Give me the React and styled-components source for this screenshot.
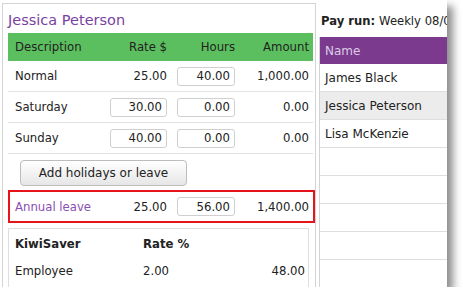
import React from 'react'
import styled, { createGlobalStyle } from 'styled-components'

const GlobalStyle = createGlobalStyle`
  body {
    margin: 0;
    background: #fff;
    font-family: "DejaVu Sans", Verdana, sans-serif;
    color: #222;
  }
`;

const Window = styled.div`
  width: 447px;
  height: 287px;
  display: flex;
  align-items: flex-start;
  overflow: hidden;
  background: #fff;
  box-shadow: 6px 6px 8px rgba(0, 0, 0, 0.45);
`;

const LeftPanel = styled.div`
  margin: 3px 0 0 2px;
  width: 314px;
  height: 290px;
  flex-shrink: 0;
  box-sizing: border-box;
  border: 1px solid #d4d4d4;
  border-bottom: none;
  padding: 0 2px 0 5px;
`;

const Title = styled.div`
  font-size: 14.5px;
  line-height: 17px;
  padding: 8px 0 4px;
  color: #7b3f9f;
`;

const Row = styled.div`
  display: grid;
  grid-template-columns: 100px 63px 68px 74px;
  align-items: center;
  height: ${p => p.$h || 30}px;
  font-size: 11.7px;
  background: ${p => p.$head ? '#5cbf5f' : 'transparent'};
  border-bottom: ${p => p.$head ? 'none' : '1px solid #e2e2e2'};
`;

const Cell = styled.div`
  padding: 0 4px;
  text-align: ${p => p.$left ? 'left' : 'right'};
  padding-left: ${p => p.$left ? '7px' : '4px'};
  display: flex;
  justify-content: ${p => p.$left ? 'flex-start' : 'flex-end'};
  white-space: nowrap;
`;

const Field = styled.input`
  width: ${p => p.$w || 58}px;
  height: 19px;
  box-sizing: border-box;
  border: 1px solid #cfcfcf;
  border-radius: 3px;
  text-align: right;
  padding: 0 4px;
  font: 11.7px "DejaVu Sans", Verdana, sans-serif;
  color: #222;
`;

const ButtonRow = styled.div`
  padding: 6px 0 4px 12px;
`;

const Button = styled.button`
  height: 26px;
  width: 167px;
  border: 1px solid #bdbdbd;
  border-radius: 4px;
  background: linear-gradient(#ffffff, #e6e6e6);
  font: 12px "DejaVu Sans", Verdana, sans-serif;
  color: #222;
  padding: 0;
`;

const Highlight = styled.div`
  width: 307px;
  box-sizing: border-box;
  border: 2px solid #e8141b;
`;

const LeaveRow = styled(Row)`
  grid-template-columns: 98px 63px 68px 74px;
  height: 29px;
  border-bottom: none;
  color: #222;
`;

const LeaveName = styled(Cell)`
  padding-left: 5px;
  color: #8a4fb4;
`;

const SaverBox = styled.div`
  margin-top: 5px;
  width: 301px;
  height: 70px;
  box-sizing: border-box;
  border: 1px solid #dedede;
  border-bottom: none;
`;

const SaverRow = styled.div`
  display: grid;
  grid-template-columns: 128px 1fr auto;
  align-items: center;
  height: ${p => p.$h}px;
  padding: 0 3px 0 6px;
  font-size: 11.7px;
  font-weight: ${p => p.$bold ? 'bold' : 'normal'};
`;

const RightPanel = styled.div`
  margin: 4px 0 0 3px;
  flex: 1;
  min-width: 0;
`;

const PayRun = styled.div`
  height: 33px;
  display: flex;
  align-items: center;
  padding: 0 0 0 2px;
  font-size: 11.6px;
  white-space: nowrap;
  overflow: hidden;
  b { margin-right: 4px; }
`;

const List = styled.div`
  border-left: 1px solid #d4d4d4;
`;

const ListHead = styled.div`
  height: 27px;
  display: flex;
  align-items: center;
  padding-left: 5px;
  background: #7b3a8d;
  color: #dccbe6;
  font-size: 12px;
`;

const ListRow = styled.div`
  height: 27px;
  display: flex;
  align-items: center;
  padding-left: 5px;
  font-size: 12px;
  border-bottom: 1px solid #dedede;
  background: ${p => p.$active ? '#ececec' : '#fff'};
  white-space: nowrap;
`;

const lines = [
  { name: 'Normal', rate: '25.00', hours: '40.00', amount: '1,000.00' },
  { name: 'Saturday', rate: '30.00', hours: '0.00', amount: '0.00', edit: true },
  { name: 'Sunday', rate: '40.00', hours: '0.00', amount: '0.00', edit: true },
];

const employees = ['James Black', 'Jessica Peterson', 'Lisa McKenzie', '', '', '', '', ''];

export default function App() {
  return (
    <>
      <GlobalStyle />
      <Window>
        <LeftPanel>
          <Title>Jessica Peterson</Title>
          <Row $head $h={28}>
            <Cell $left>Description</Cell>
            <Cell>Rate $</Cell>
            <Cell>Hours</Cell>
            <Cell>Amount</Cell>
          </Row>
          {lines.map(l => (
            <Row key={l.name}>
              <Cell $left>{l.name}</Cell>
              <Cell>{l.edit ? <Field $w={57} defaultValue={l.rate} /> : l.rate}</Cell>
              <Cell><Field defaultValue={l.hours} /></Cell>
              <Cell>{l.amount}</Cell>
            </Row>
          ))}
          <ButtonRow>
            <Button>Add holidays or leave</Button>
          </ButtonRow>
          <Highlight>
            <LeaveRow>
              <LeaveName $left>Annual leave</LeaveName>
              <Cell>25.00</Cell>
              <Cell><Field defaultValue="56.00" /></Cell>
              <Cell>1,400.00</Cell>
            </LeaveRow>
          </Highlight>
          <SaverBox>
            <SaverRow $bold $h={29}>
              <span>KiwiSaver</span>
              <span>Rate %</span>
              <span></span>
            </SaverRow>
            <SaverRow $h={26}>
              <span>Employee</span>
              <span>2.00</span>
              <span>48.00</span>
            </SaverRow>
          </SaverBox>
        </LeftPanel>
        <RightPanel>
          <PayRun><b>Pay run:</b>Weekly 08/06/2012 - 14/06/2012</PayRun>
          <List>
            <ListHead>Name</ListHead>
            {employees.map((e, i) => (
              <ListRow key={i} $active={e === 'Jessica Peterson'}>{e}</ListRow>
            ))}
          </List>
        </RightPanel>
      </Window>
    </>
  )
}
